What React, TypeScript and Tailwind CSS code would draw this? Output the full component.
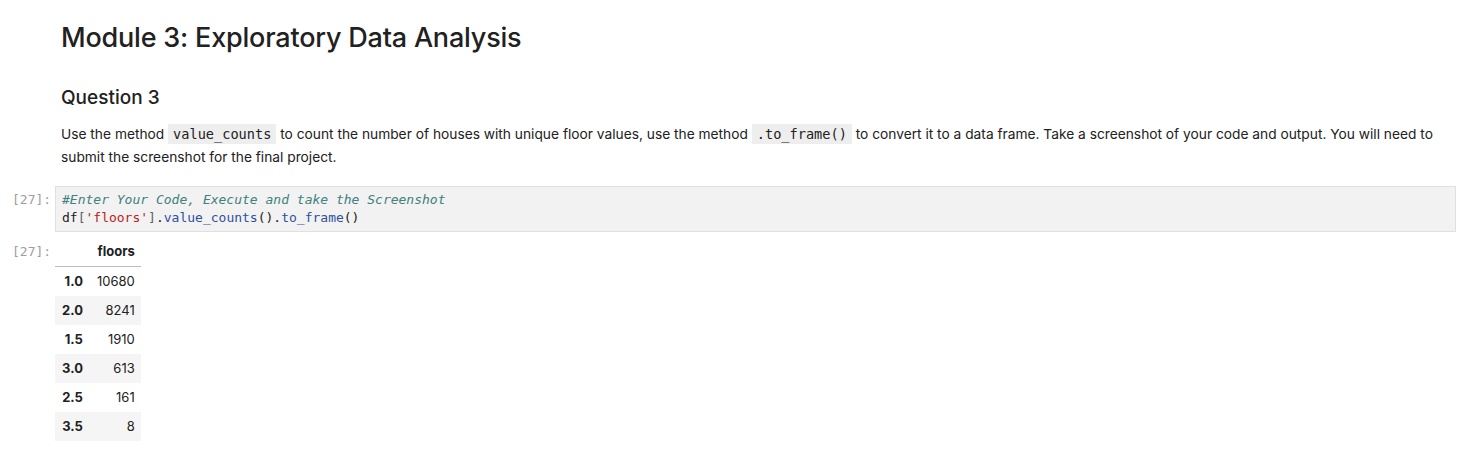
import React from "react";

const sans = "font-['Inter','Noto_Sans',sans-serif]";
const mono = "font-['DejaVu_Sans_Mono','Liberation_Mono',monospace]";

const rows: [string, number][] = [
  ["1.0", 10680],
  ["2.0", 8241],
  ["1.5", 1910],
  ["3.0", 613],
  ["2.5", 161],
  ["3.5", 8],
];

function InlineCode({ children }: { children: React.ReactNode }) {
  return (
    <code className={`${mono} text-[13.6px] bg-[#eeeeee] px-[5px] py-[2px] text-[#212121]`}>
      {children}
    </code>
  );
}

function Prompt({ children }: { children: React.ReactNode }) {
  return (
    <div className={`${mono} w-[55px] shrink-0 text-[13px] leading-[18px] text-[#9e9e9e] pl-[12px]`}>
      {children}
    </div>
  );
}

export default function App() {
  return (
    <div className={`${sans} w-[1465px] h-[452px] bg-white text-[#212121] overflow-hidden`}>
      <div className="pl-[61px] pr-[9px]">
        <h1 className="text-[27px] font-medium leading-[34px] pt-[21px] tracking-[-0.2px]">
          Module 3: Exploratory Data Analysis
        </h1>
        <h2 className="text-[19px] font-medium leading-[24px] mt-[31px]">Question 3</h2>
        <p className="text-[13.75px] leading-[22.5px] mt-[13px]">
          Use the method <InlineCode>value_counts</InlineCode> to count the number of houses with unique
          floor values, use the method <InlineCode>.to_frame()</InlineCode> to convert it to a data frame.
          Take a screenshot of your code and output. You will need to submit the screenshot for the final
          project.
        </p>
      </div>

      <div className="flex mt-[18px] pr-[9px]">
        <Prompt>
          <div className="pt-[5px]">[27]:</div>
        </Prompt>
        <div
          className={`${mono} flex-1 bg-[#f2f2f2] border border-[#e0e0e0] px-[6px] py-[4px] text-[13px] leading-[18px]`}
        >
          <div className="italic text-[#408080]">#Enter Your Code, Execute and take the Screenshot</div>
          <div>
            <span className="text-[#212121]">df</span>
            <span className="text-[#616161]">[</span>
            <span className="text-[#ba2121]">'floors'</span>
            <span className="text-[#616161]">]</span>
            <span className="text-[#212121]">.</span>
            <span className="text-[#2f4fa3]">value_counts</span>
            <span className="text-[#212121]">().</span>
            <span className="text-[#2f4fa3]">to_frame</span>
            <span className="text-[#212121]">()</span>
          </div>
        </div>
      </div>

      <div className="flex mt-[9px]">
        <Prompt>
          <div className="pt-[2px]">[27]:</div>
        </Prompt>
        <table className="text-[13px] leading-[17px] border-collapse">
          <thead>
            <tr className="border-b border-[#bdbdbd]">
              <th className="px-[6px] pt-[2px] pb-[6px]"></th>
              <th className="pl-[8px] pr-[6px] pt-[2px] pb-[6px] text-right font-bold">floors</th>
            </tr>
          </thead>
          <tbody>
            {rows.map(([idx, val], i) => (
              <tr key={idx} className={i % 2 === 1 ? "bg-[#f5f5f5]" : ""}>
                <th className="pl-[7px] pr-[6px] py-[6px] text-right font-bold">{idx}</th>
                <td className="pl-[8px] pr-[6px] py-[6px] text-right">{val}</td>
              </tr>
            ))}
          </tbody>
        </table>
      </div>
    </div>
  );
}
